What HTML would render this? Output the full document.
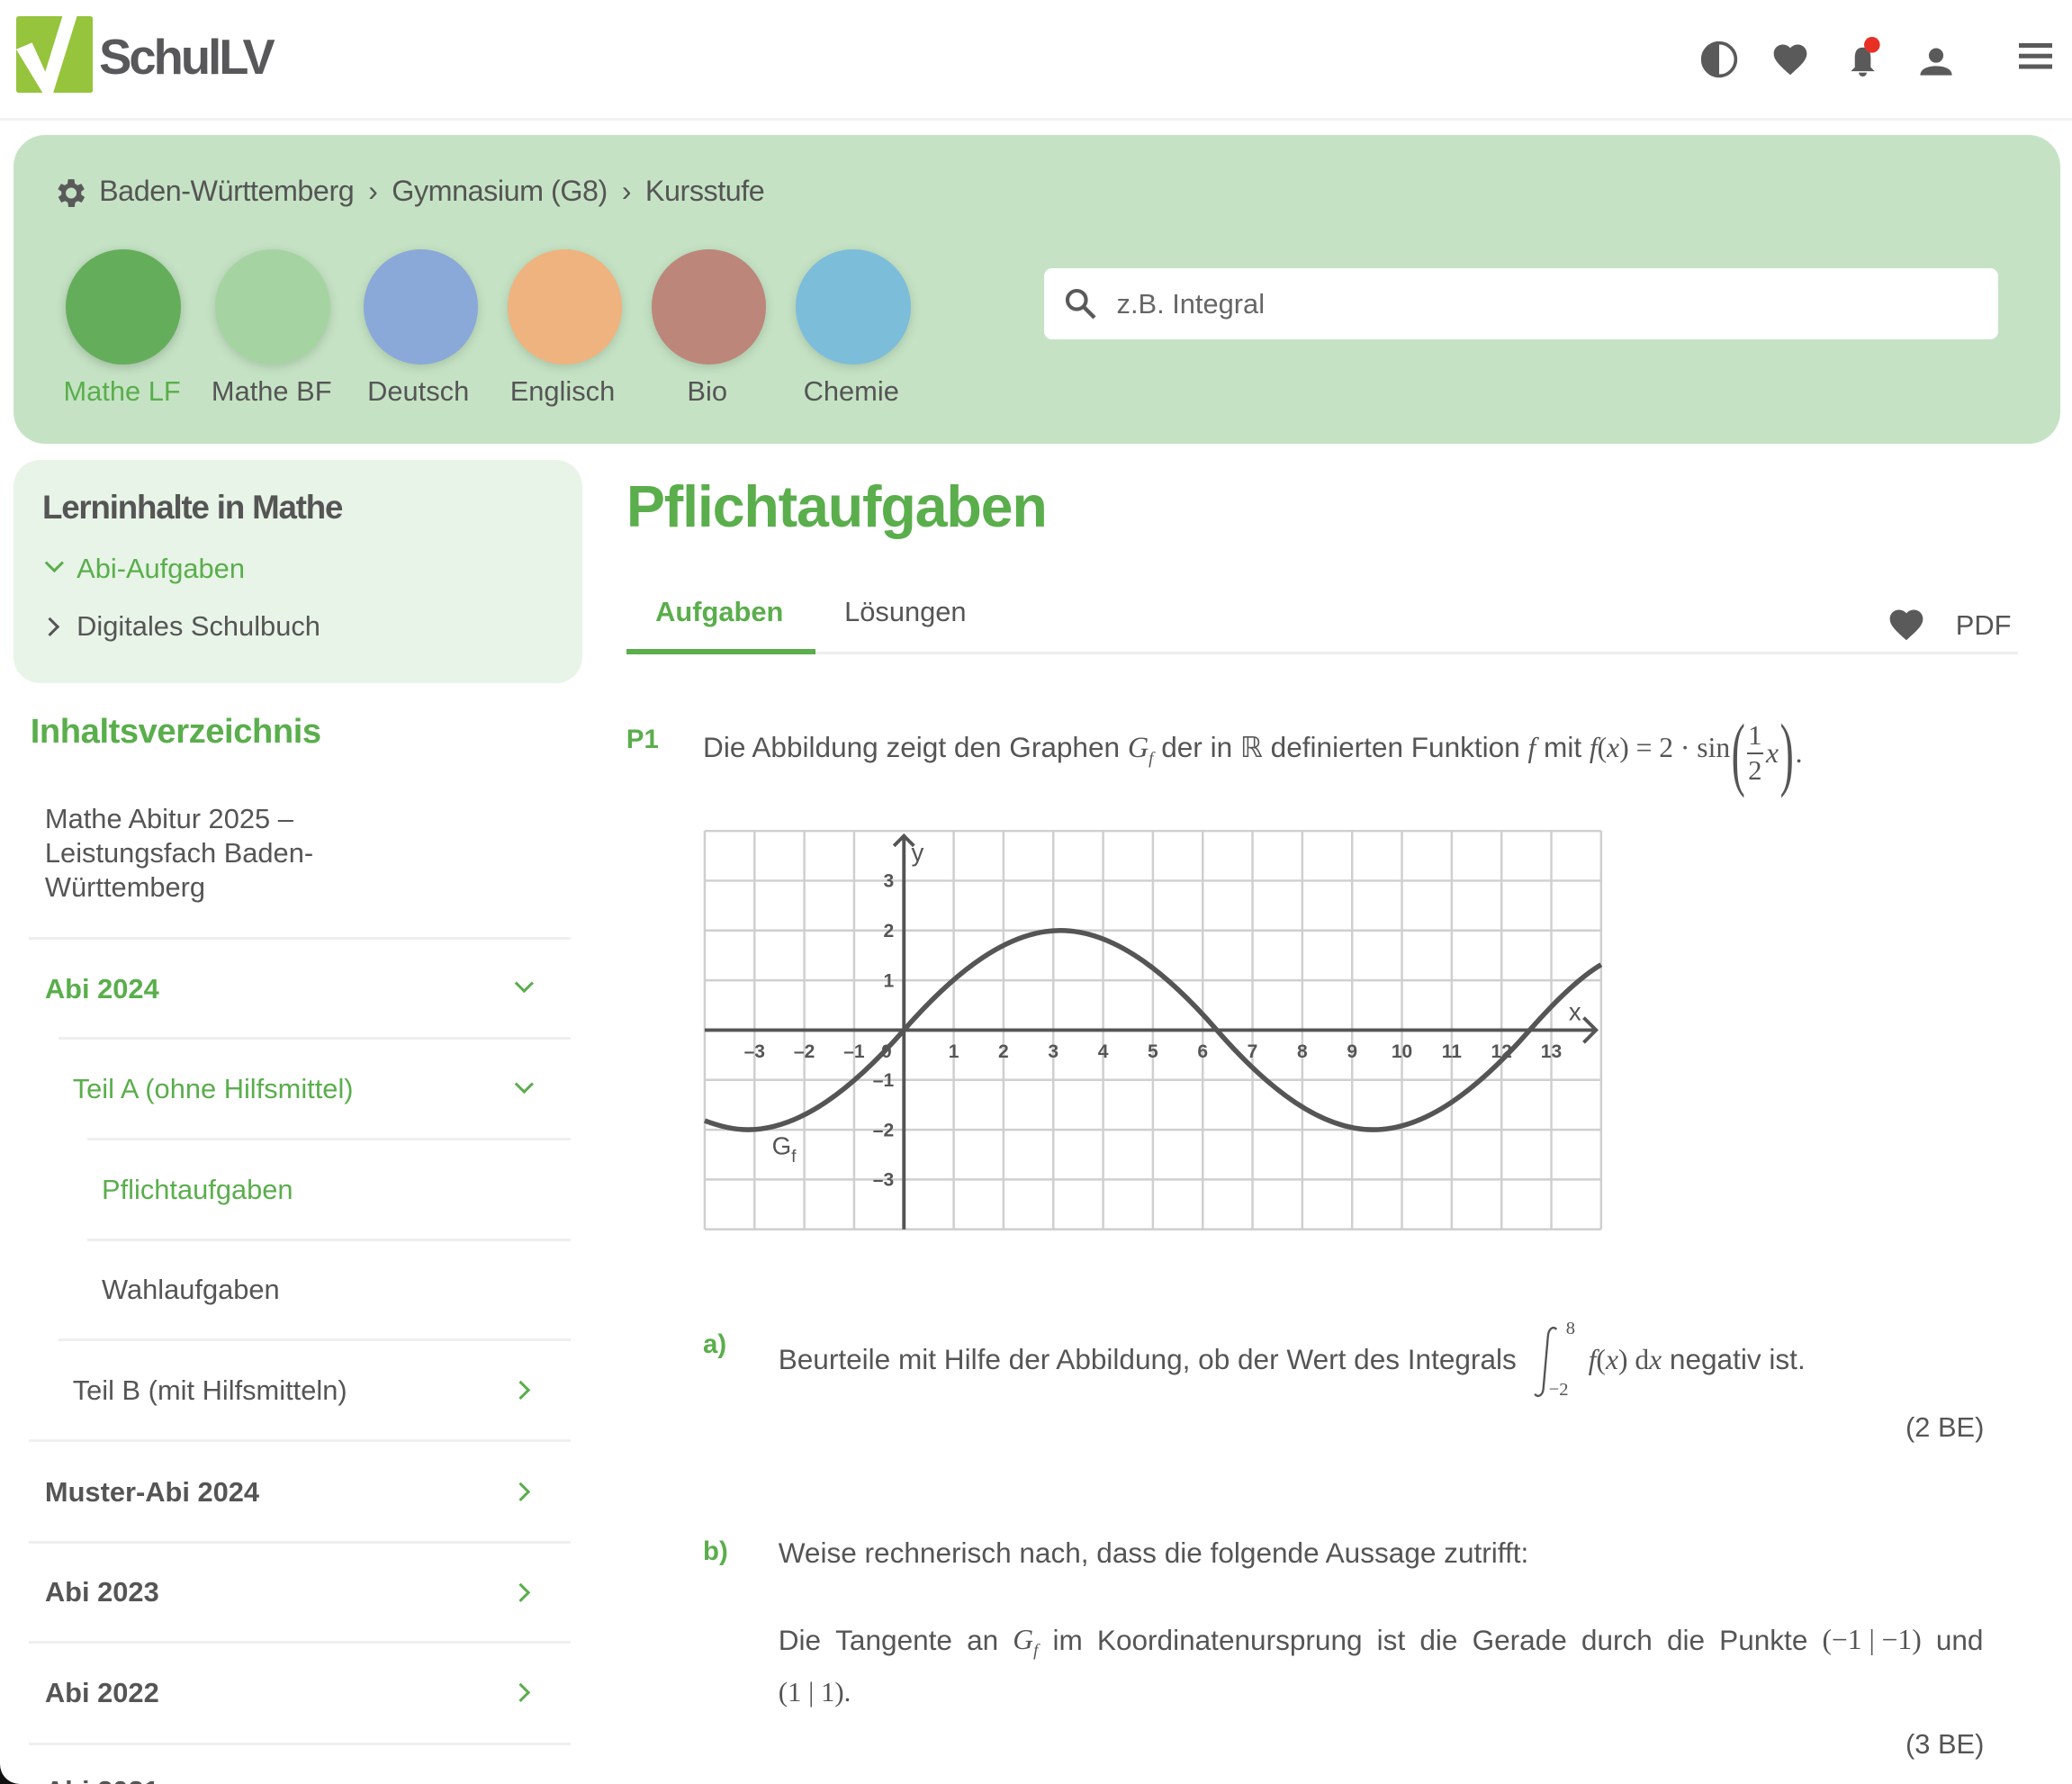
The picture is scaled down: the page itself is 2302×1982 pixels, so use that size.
<!DOCTYPE html>
<html><head><meta charset="utf-8"><style>
*{margin:0;padding:0;box-sizing:border-box}
html,body{width:2302px;height:1982px;overflow:hidden;background:#fff}
#z{zoom:1.46811;width:1568px;height:1350px;position:relative;font-family:"Liberation Sans",sans-serif;color:#555}
.a{position:absolute;white-space:nowrap}
.g{color:#5aae4c}
.b{font-weight:bold}
.sep{position:absolute;height:2px;background:#efefef;right:1136px}
.chev{position:absolute;left:392px;width:10px;height:10px;border-right:2.5px solid #5aae4c;border-bottom:2.5px solid #5aae4c}
.m{font-family:"Liberation Serif",serif;font-style:italic}
.r{font-family:"Liberation Serif",serif}
.fr{display:inline-block;vertical-align:middle;text-align:center;font-family:"Liberation Serif",serif;font-size:21px;line-height:25px}
.fr span{display:block}
.fr .t{border-bottom:1.5px solid #555;padding:0 1px}
.bp{font-family:"Liberation Serif",serif;font-size:62px;font-weight:100;vertical-align:middle;display:inline-block;transform:scaleX(.5);line-height:62px;margin:0 -4px}
</style></head><body><div id="z">
<!-- header -->
<svg class="a" style="left:12px;top:12px" width="58" height="58" viewBox="0 0 58 58"><rect width="58" height="58" rx="2" fill="#96c43d"/><path d="M0 25 L12 20 L22 42 L35 0 L46 0 L28 58 L20 58 Z" fill="#fff"/></svg>
<div class="a b" style="left:75px;top:22px;font-size:37px;letter-spacing:-2px;color:#58585a">SchulLV</div>
<svg class="a" style="left:1286px;top:30px" width="30" height="30" viewBox="0 0 30 30"><circle cx="15" cy="15" r="12.5" fill="none" stroke="#5a5a5a" stroke-width="2.5"/><path d="M15 2.5 A12.5 12.5 0 0 0 15 27.5Z" fill="#5a5a5a"/></svg>
<svg class="a" style="left:1340px;top:30px" width="30" height="30" viewBox="0 0 24 24"><path d="M12 21.4l-1.5-1.3C5.4 15.4 2 12.3 2 8.5 2 5.4 4.4 3 7.5 3c1.7 0 3.4.8 4.5 2.1C13.1 3.8 14.8 3 16.5 3 19.6 3 22 5.4 22 8.5c0 3.8-3.4 6.9-8.5 11.5L12 21.4z" fill="#5a5a5a"/></svg>
<svg class="a" style="left:1396px;top:28px" width="32" height="32" viewBox="0 0 32 32"><path d="M14 8c-5 0-6 4-6 8v7l-3 3h18l-3-3v-7c0-4-1-8-6-8z" fill="#5a5a5a"/><path d="M11 27a3 3 0 0 0 6 0z" fill="#5a5a5a"/><circle cx="21" cy="6" r="6" fill="#e63124"/></svg>
<svg class="a" style="left:1450px;top:30px" width="30" height="30" viewBox="0 0 30 30"><circle cx="15" cy="12" r="5.5" fill="#5a5a5a"/><path d="M3 27c0-5 6-7 12-7s12 2 12 7z" fill="#5a5a5a"/></svg>
<div class="a" style="left:1528px;top:33px;width:25px;height:3px;background:#5a5a5a;box-shadow:0 8px 0 #5a5a5a,0 16px 0 #5a5a5a"></div>
<div class="a" style="left:0;top:89px;width:1568px;height:2px;background:#f2f2f2"></div>
<!-- green panel -->
<div class="a" style="left:10px;top:102px;width:1549px;height:234px;background:#c5e3c4;border-radius:24px"></div>
<svg class="a" style="left:39px;top:132px" width="28" height="28" viewBox="0 0 24 24"><path fill="#5a5a5a" d="M19.4 13a7.5 7.5 0 0 0 0-2l2.1-1.6-2-3.5-2.5 1a7.6 7.6 0 0 0-1.7-1L14.9 3h-4l-.4 2.9c-.6.3-1.2.6-1.7 1l-2.5-1-2 3.5L6.6 11a7.5 7.5 0 0 0 0 2l-2.1 1.6 2 3.5 2.5-1c.5.4 1.1.7 1.7 1l.4 2.9h4l.4-2.9c.6-.3 1.2-.6 1.7-1l2.5 1 2-3.5zM12.9 15.5a3.5 3.5 0 1 1 0-7 3.5 3.5 0 0 1 0 7z"/></svg>
<div class="a" style="left:75px;top:132px;font-size:22px;letter-spacing:-.3px">Baden-Württemberg <span style="margin:0 5px">›</span> Gymnasium (G8) <span style="margin:0 5px">›</span> Kursstufe</div>
<div class="a" style="left:50px;top:189px;width:87px;height:87px;border-radius:50%;background:#64ae5b;box-shadow:0 2px 8px rgba(0,0,0,.2)"></div>
<div class="a" style="left:163px;top:189px;width:87px;height:87px;border-radius:50%;background:#a5d4a2;box-shadow:0 2px 8px rgba(0,0,0,.15)"></div>
<div class="a" style="left:275px;top:189px;width:87px;height:87px;border-radius:50%;background:#8aa8d8;box-shadow:0 2px 8px rgba(0,0,0,.15)"></div>
<div class="a" style="left:384px;top:189px;width:87px;height:87px;border-radius:50%;background:#efb37f;box-shadow:0 2px 8px rgba(0,0,0,.15)"></div>
<div class="a" style="left:493px;top:189px;width:87px;height:87px;border-radius:50%;background:#bc877a;box-shadow:0 2px 8px rgba(0,0,0,.15)"></div>
<div class="a" style="left:602px;top:189px;width:87px;height:87px;border-radius:50%;background:#7cbdda;box-shadow:0 2px 8px rgba(0,0,0,.15)"></div>
<div class="a g" style="left:48px;top:284px;font-size:21px">Mathe LF</div>
<div class="a" style="left:160px;top:284px;font-size:21px">Mathe BF</div>
<div class="a" style="left:278px;top:284px;font-size:21px">Deutsch</div>
<div class="a" style="left:386px;top:284px;font-size:21px">Englisch</div>
<div class="a" style="left:520px;top:284px;font-size:21px">Bio</div>
<div class="a" style="left:608px;top:284px;font-size:21px">Chemie</div>
<div class="a" style="left:790px;top:203px;width:722px;height:54px;background:#fff;border-radius:6px"></div>
<svg class="a" style="left:804px;top:216px" width="28" height="28" viewBox="0 0 24 24"><circle cx="9.5" cy="9.5" r="6" fill="none" stroke="#5a5a5a" stroke-width="2.4"/><path d="M14 14l7 7" stroke="#5a5a5a" stroke-width="2.6"/></svg>
<div class="a" style="left:845px;top:218px;font-size:21px;color:#666">z.B. Integral</div>
<!-- sidebar -->
<div class="a" style="left:10px;top:348px;width:431px;height:169px;background:#e8f4e7;border-radius:20px"></div>
<div class="a b" style="left:32px;top:370px;font-size:25px;letter-spacing:-.8px">Lerninhalte in Mathe</div>
<div class="a" style="left:36px;top:421px;width:10px;height:10px;border-right:2.5px solid #5aae4c;border-bottom:2.5px solid #5aae4c;transform:rotate(45deg)"></div>
<div class="a g" style="left:58px;top:418px;font-size:21px">Abi-Aufgaben</div>
<div class="a" style="left:33px;top:469px;width:10px;height:10px;border-right:2.5px solid #555;border-bottom:2.5px solid #555;transform:rotate(-45deg)"></div>
<div class="a" style="left:58px;top:462px;font-size:21px">Digitales Schulbuch</div>
<div class="a g b" style="left:23px;top:539px;font-size:26px;letter-spacing:-.3px">Inhaltsverzeichnis</div>
<div class="a" style="left:34px;top:607px;font-size:21px;line-height:26px;white-space:normal;width:260px">Mathe Abitur 2025 – Leistungsfach Baden-Württemberg</div>
<div class="sep" style="left:22px;top:709px"></div>
<div class="a g b" style="left:34px;top:736px;font-size:21px">Abi 2024</div>
<div class="chev" style="top:739px;transform:rotate(45deg)"></div>
<div class="sep" style="left:44px;top:785px"></div>
<div class="a g" style="left:55px;top:812px;font-size:21px">Teil A (ohne Hilfsmittel)</div>
<div class="chev" style="top:815px;transform:rotate(45deg)"></div>
<div class="sep" style="left:66px;top:861px"></div>
<div class="a g" style="left:77px;top:888px;font-size:21px">Pflichtaufgaben</div>
<div class="sep" style="left:66px;top:937px"></div>
<div class="a" style="left:77px;top:964px;font-size:21px">Wahlaufgaben</div>
<div class="sep" style="left:44px;top:1013px"></div>
<div class="a" style="left:55px;top:1040px;font-size:21px">Teil B (mit Hilfsmitteln)</div>
<div class="chev" style="top:1047px;left:389px;transform:rotate(-45deg)"></div>
<div class="sep" style="left:22px;top:1089px"></div>
<div class="a b" style="left:34px;top:1117px;font-size:21px">Muster-Abi 2024</div>
<div class="chev" style="top:1124px;left:389px;transform:rotate(-45deg)"></div>
<div class="sep" style="left:22px;top:1166px"></div>
<div class="a b" style="left:34px;top:1193px;font-size:21px">Abi 2023</div>
<div class="chev" style="top:1200px;left:389px;transform:rotate(-45deg)"></div>
<div class="sep" style="left:22px;top:1242px"></div>
<div class="a b" style="left:34px;top:1269px;font-size:21px">Abi 2022</div>
<div class="chev" style="top:1276px;left:389px;transform:rotate(-45deg)"></div>
<div class="sep" style="left:22px;top:1319px"></div>
<div class="a b" style="left:34px;top:1343px;font-size:21px">Abi 2021</div>
<!-- main -->
<div class="a g b" style="left:474px;top:358px;font-size:44px;letter-spacing:-.8px">Pflichtaufgaben</div>
<div class="a" style="left:474px;top:493px;width:1053px;height:2px;background:#eee"></div>
<div class="a" style="left:474px;top:491px;width:143px;height:4px;background:#5aae4c"></div>
<div class="a g b" style="left:496px;top:451px;font-size:21px">Aufgaben</div>
<div class="a" style="left:639px;top:451px;font-size:21px">Lösungen</div>
<svg class="a" style="left:1428px;top:458px" width="30" height="30" viewBox="0 0 24 24"><path d="M12 21.4l-1.5-1.3C5.4 15.4 2 12.3 2 8.5 2 5.4 4.4 3 7.5 3c1.7 0 3.4.8 4.5 2.1C13.1 3.8 14.8 3 16.5 3 19.6 3 22 5.4 22 8.5c0 3.8-3.4 6.9-8.5 11.5L12 21.4z" fill="#5a5a5a"/></svg>
<div class="a" style="left:1480px;top:461px;font-size:21px">PDF</div>
<div class="a g b" style="left:474px;top:548px;font-size:20px">P1</div>
<div class="a" style="left:532px;top:538px;font-size:21.5px;height:64px;line-height:64px;display:flex;align-items:center;gap:0">
<span>Die Abbildung zeigt den Graphen&nbsp;<span class="m" style="font-size:22px">G<sub style="font-size:13px">f</sub></span>&nbsp;der in&nbsp;<span class="r">ℝ</span>&nbsp;definierten Funktion&nbsp;<span class="m">f</span>&nbsp;mit&nbsp;<span class="m">f</span><span class="r">(</span><span class="m">x</span><span class="r">) = 2 · sin</span></span><span class="bp">(</span><span class="fr"><span class="t">1</span><span>2</span></span><span class="m" style="margin-left:2px">x</span><span class="bp">)</span><span class="r">.</span></div>
<!-- graph -->
<svg class="a" style="left:532px;top:628px" width="681" height="303" viewBox="-4.02 -4.02 18.04 8.04">
<g transform="scale(1,-1)" fill="none">
<g stroke="#cfcfcf" stroke-width="0.045">
<path d="M-4 -4V4M-3 -4V4M-2 -4V4M-1 -4V4M1 -4V4M2 -4V4M3 -4V4M4 -4V4M5 -4V4M6 -4V4M7 -4V4M8 -4V4M9 -4V4M10 -4V4M11 -4V4M12 -4V4M13 -4V4M14 -4V4"/>
<path d="M-4 -4H14M-4 -3H14M-4 -2H14M-4 -1H14M-4 1H14M-4 2H14M-4 3H14M-4 4H14"/>
</g>
<path d="M-4 0H13.9M13.65 .25L13.9 0 13.65 -.25M0 -4V3.9M-.2 3.7L0 3.9 .2 3.7" stroke="#555" stroke-width="0.07"/>
<path stroke="#555" stroke-width="0.1" stroke-linejoin="round" d="M-4,-1.819 C-3.65,-1.95 -3.35,-2 -3.1416,-2 C-2.1,-2 -1.05,-1.2 0,0 C1.05,1.2 2.1,2 3.1416,2 C4.19,2 5.24,1.2 6.283,0 C7.33,-1.2 8.38,-2 9.425,-2 C10.47,-2 11.52,-1.2 12.566,0 C13.05,0.55 13.55,1.05 14,1.314"/>
</g>
<g fill="#555" font-family="Liberation Sans,sans-serif" font-size="0.38" font-weight="bold" text-anchor="middle">
<text x="-3" y="0.55">–3</text><text x="-2" y="0.55">–2</text><text x="-1" y="0.55">–1</text><text x="-0.35" y="0.55">0</text>
<text x="1" y="0.55">1</text><text x="2" y="0.55">2</text><text x="3" y="0.55">3</text><text x="4" y="0.55">4</text><text x="5" y="0.55">5</text><text x="6" y="0.55">6</text><text x="7" y="0.55">7</text><text x="8" y="0.55">8</text><text x="9" y="0.55">9</text><text x="10" y="0.55">10</text><text x="11" y="0.55">11</text><text x="12" y="0.55">12</text><text x="13" y="0.55">13</text>
<g text-anchor="end"><text x="-0.2" y="-2.87">3</text><text x="-0.2" y="-1.87">2</text><text x="-0.2" y="-0.87">1</text><text x="-0.2" y="1.13">–1</text><text x="-0.2" y="2.13">–2</text><text x="-0.2" y="3.13">–3</text></g>
</g>
<g fill="#555" font-family="Liberation Sans,sans-serif" font-size="0.5"><text x="0.15" y="-3.4">y</text><text x="13.35" y="-0.2">x</text><text x="-2.65" y="2.5">G<tspan font-size="0.35" dy="0.15">f</tspan></text></g>
</svg>
<!-- a -->
<div class="a g b" style="left:532px;top:1006px;font-size:20px">a)</div>
<div class="a" style="left:589px;top:1016px;font-size:21.5px">Beurteile mit Hilfe der Abbildung, ob der Wert des Integrals</div>
<svg class="a" style="left:1158px;top:1002px" width="24" height="58" viewBox="0 0 24 58"><path d="M20 4c-3-3-6 0-6.5 5L10 49c-.5 5-4 7-6.5 4" fill="none" stroke="#555" stroke-width="1.6"/></svg>
<div class="a r" style="left:1185px;top:998px;font-size:14px">8</div>
<div class="a r" style="left:1172px;top:1044px;font-size:14px">−2</div>
<div class="a" style="left:1202px;top:1016px;font-size:21.5px"><span class="m">f</span><span class="r">(</span><span class="m">x</span><span class="r">) d</span><span class="m">x</span> negativ ist.</div>
<div class="a" style="left:1442px;top:1068px;font-size:21px">(2 BE)</div>
<div class="a g b" style="left:532px;top:1163px;font-size:20px">b)</div>
<div class="a" style="left:589px;top:1163px;font-size:21.5px">Weise rechnerisch nach, dass die folgende Aussage zutrifft:</div>
<div class="a" style="left:589px;top:1229px;width:912px;font-size:21.5px;display:flex;justify-content:space-between"><span>Die</span><span>Tangente</span><span>an</span><span class="m">G<sub style="font-size:13px">f</sub></span><span>im</span><span>Koordinatenursprung</span><span>ist</span><span>die</span><span>Gerade</span><span>durch</span><span>die</span><span>Punkte</span><span class="r">(−1 | −1)</span><span>und</span></div>
<div class="a r" style="left:589px;top:1269px;font-size:21px">(1 | 1).</div>
<div class="a" style="left:1442px;top:1308px;font-size:21px">(3 BE)</div>
<div class="a" style="left:0;top:1335px;width:15px;height:15px;background:#111;clip-path:path('M0 0 A15 15 0 0 0 15 15 L0 15Z')"></div>
</div></body></html>
